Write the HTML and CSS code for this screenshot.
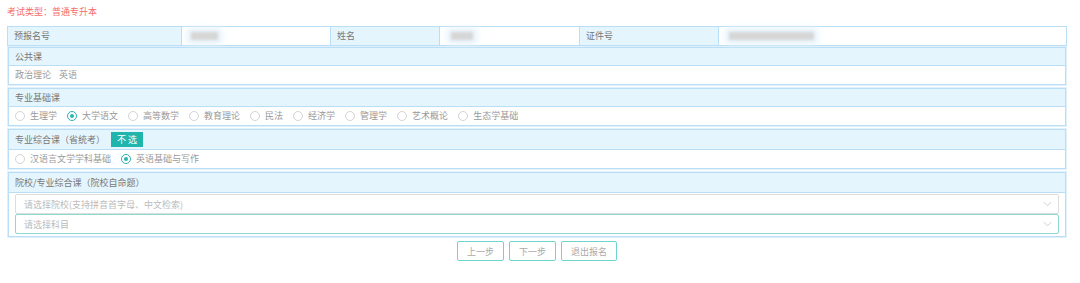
FILE: index.html
```html
<!DOCTYPE html>
<html lang="zh">
<head>
<meta charset="utf-8">
<link rel="stylesheet" href="styles.css">
</head>
<body>
<div class="page">
  <div class="exam-type">考试类型：普通专升本</div>

  <div class="info-row">
    <div class="cell label">预报名号</div>
    <div class="cell value"><span class="blur b1"></span></div>
    <div class="cell label">姓名</div>
    <div class="cell value"><span class="blur b2"></span></div>
    <div class="cell label">证件号</div>
    <div class="cell value"><span class="blur b3"></span></div>
  </div>

  <div class="section">
    <div class="sec-head">公共课</div>
    <div class="sec-body text">政治理论<span class="sp"></span>英语</div>
  </div>

  <div class="section">
    <div class="sec-head">专业基础课</div>
    <div class="sec-body radios">
      <label class="radio"><span class="dot"></span>生理学</label>
      <label class="radio on"><span class="dot"></span>大学语文</label>
      <label class="radio"><span class="dot"></span>高等数学</label>
      <label class="radio"><span class="dot"></span>教育理论</label>
      <label class="radio"><span class="dot"></span>民法</label>
      <label class="radio"><span class="dot"></span>经济学</label>
      <label class="radio"><span class="dot"></span>管理学</label>
      <label class="radio"><span class="dot"></span>艺术概论</label>
      <label class="radio"><span class="dot"></span>生态学基础</label>
    </div>
  </div>

  <div class="section">
    <div class="sec-head tall">专业综合课（省统考）<span class="none-btn">不 选</span></div>
    <div class="sec-body radios">
      <label class="radio"><span class="dot"></span>汉语言文学学科基础</label>
      <label class="radio on"><span class="dot"></span>英语基础与写作</label>
    </div>
  </div>

  <div class="section school">
    <div class="sec-head">院校/专业综合课（院校自命题）</div>
    <div class="selects">
      <div class="select">请选择院校(支持拼音首字母、中文检索)<svg class="chev" viewBox="0 0 10 6" width="9" height="6"><path d="M1 1 L5 5 L9 1" fill="none" stroke="#c8c8c8" stroke-width="1"/></svg></div>
      <div class="select focus">请选择科目<svg class="chev" viewBox="0 0 10 6" width="9" height="6"><path d="M1 1 L5 5 L9 1" fill="none" stroke="#c8c8c8" stroke-width="1"/></svg></div>
    </div>
  </div>

  <div class="actions">
    <span class="btn">上一步</span>
    <span class="btn">下一步</span>
    <span class="btn wide">退出报名</span>
  </div>
</div>
</body>
</html>
```

FILE: styles.css
```css
* { box-sizing: border-box; }
html, body { margin: 0; padding: 0; background: #fff; }
body {
  font-family: "Noto Sans CJK SC", "Noto Sans", sans-serif;
  font-size: 9px;
  color: #777;
}
.page {
  width: 1060px;
  margin-left: 7px;
  padding-top: 5px;
}
.exam-type {
  color: #f56c6c;
  height: 14px;
  line-height: 14px;
  margin-bottom: 7px;
}
.info-row {
  display: grid;
  grid-template-columns: 173px 149px 109px 140px 139px 1fr;
  height: 20px;
  border: 1px solid #b9def5;
  margin-bottom: 1px;
}
.cell {
  line-height: 18px;
  padding-left: 6px;
  border-left: 1px solid #b9def5;
  position: relative;
}
.cell:first-child { border-left: 0; }
.cell.label { background: #e5f5fd; color: #777; }
.cell.value { background: #fff; }
.blur {
  position: absolute;
  top: 5px;
  height: 8px;
  background: #d6d6d6;
  filter: blur(1.5px);
  box-shadow: 0 0 6px 4px #e6f3fc;
}
.b1 { left: 9px; width: 27px; }
.b2 { left: 11px; width: 22px; }
.b3 { left: 10px; width: 85px; }

.section {
  border: 1px solid #b9def5;
  box-shadow: 0 0 0 1px #e0f1fc;
  margin: 1px 1px 3px 1px;
}
.sec-head {
  background: #e5f5fd;
  height: 18px;
  line-height: 18px;
  padding-left: 6px;
  color: #777;
  border-bottom: 1px solid #b9def5;
  display: flex;
  align-items: center;
}
.sec-head.tall { height: 20px; }
.sec-body {
  height: 18px;
  line-height: 18px;
  padding-left: 6px;
  color: #999;
}
.sp { display: inline-block; width: 8px; }
.radios { display: flex; align-items: center; }
.radio {
  display: flex;
  align-items: center;
  margin-right: 10px;
}
.dot {
  width: 10px;
  height: 10px;
  border: 1px solid #d4d4d4;
  border-radius: 50%;
  margin-right: 5px;
  display: flex;
  align-items: center;
  justify-content: center;
  background: #fff;
}
.radio.on .dot { border-color: #2cb5ad; }
.radio.on .dot::after {
  content: "";
  width: 4px;
  height: 4px;
  border-radius: 50%;
  background: #2cb5ad;
}
.none-btn {
  margin-left: 6px;
  background: #1fb5ac;
  color: #fff;
  height: 15px;
  line-height: 15px;
  padding: 0 6px;
  font-size: 9px;
}
.school .sec-head { height: 20px; }
.selects {
  padding: 1px 6px 2px 6px;
}
.select {
  height: 20px;
  border: 1px solid #ddd;
  border-radius: 2px;
  padding-left: 8px;
  color: #bbb;
  display: flex;
  align-items: center;
  justify-content: space-between;
  padding-right: 6px;
}
.select.focus { border-color: #8cd9d2; }
.chev { display: block; }

.actions {
  display: flex;
  justify-content: center;
  gap: 5px;
  margin-top: 4px;
}
.btn {
  width: 47px;
  height: 20px;
  border: 1px solid #6dd5cd;
  border-radius: 2px;
  color: #aaa;
  display: flex;
  align-items: center;
  justify-content: center;
}
.btn.wide { width: 56px; }
```
